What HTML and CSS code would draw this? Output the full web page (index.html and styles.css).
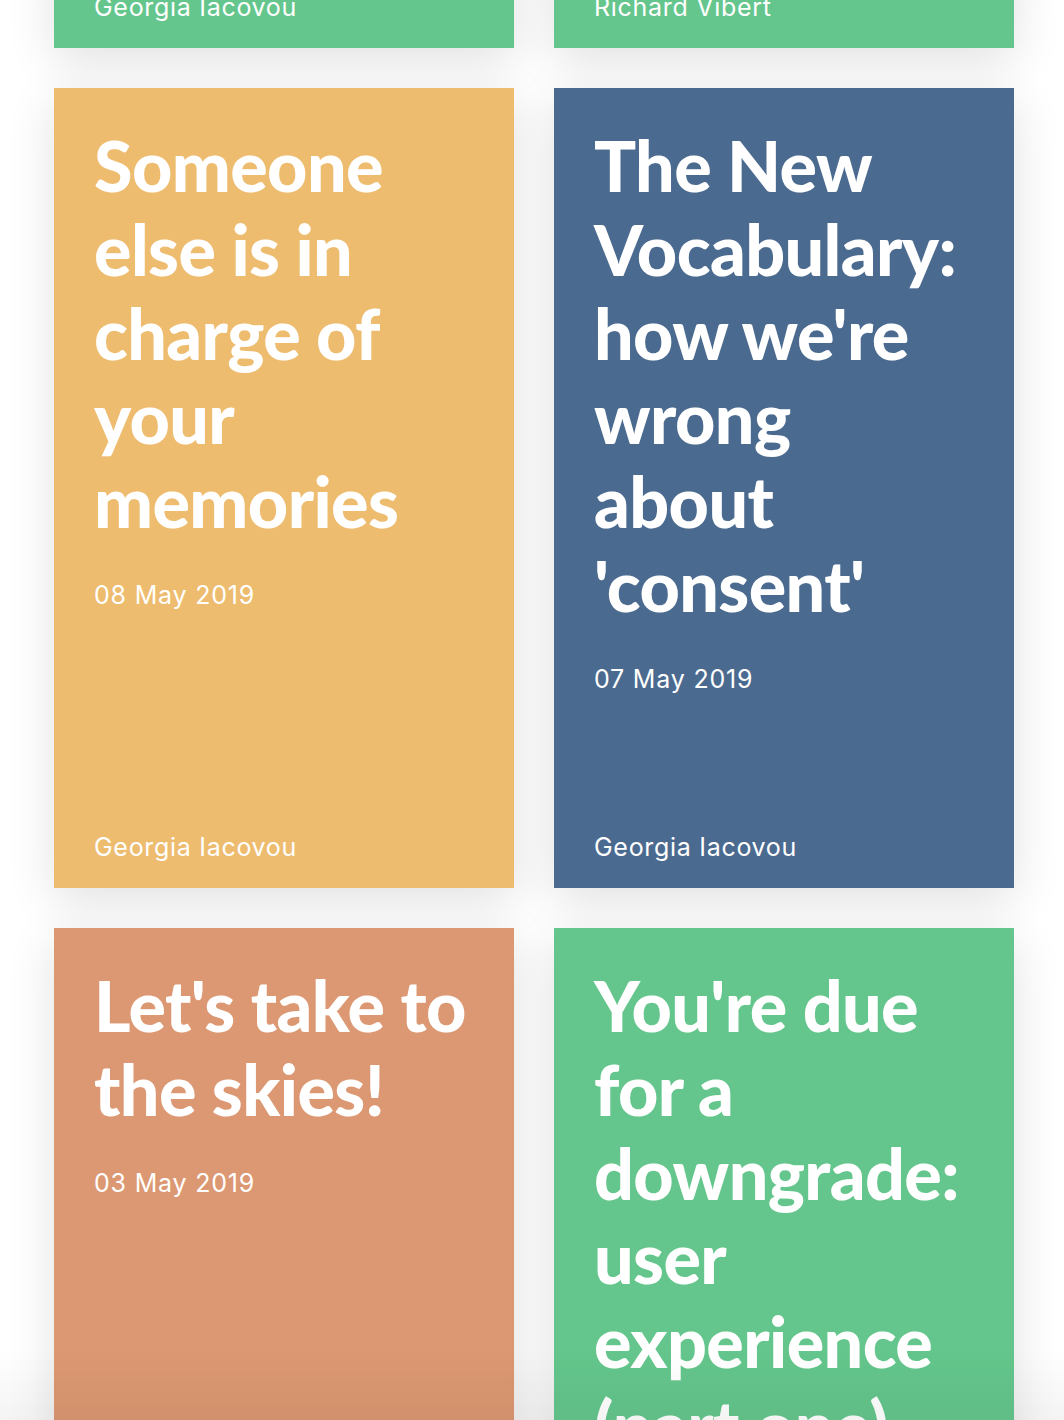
FILE: index.html
```html
<!DOCTYPE html>
<html lang="en">
<head>
<meta charset="utf-8">
<title>Articles</title>
<link rel="stylesheet" href="styles.css">
</head>
<body>
<main class="grid">
  <article class="card green">
    <h2 class="title">Designing for the people who aren't there</h2>
    <p class="date">10 May 2019</p>
    <p class="author">Georgia Iacovou</p>
  </article>
  <article class="card green">
    <h2 class="title">Why your product needs a point of view</h2>
    <p class="date">09 May 2019</p>
    <p class="author">Richard Vibert</p>
  </article>
  <article class="card orange">
    <h2 class="title">Someone else is in charge of your memories</h2>
    <p class="date">08 May 2019</p>
    <p class="author">Georgia Iacovou</p>
  </article>
  <article class="card blue">
    <h2 class="title">The New Vocabulary: how we're wrong about 'consent'</h2>
    <p class="date">07 May 2019</p>
    <p class="author">Georgia Iacovou</p>
  </article>
  <article class="card salmon">
    <h2 class="title">Let's take to the skies!</h2>
    <p class="date">03 May 2019</p>
    <p class="author">Richard Vibert</p>
  </article>
  <article class="card green">
    <h2 class="title">You're due for a downgrade: user experience (part one)</h2>
    <p class="date">01 May 2019</p>
    <p class="author">Georgia Iacovou</p>
  </article>
</main>
<div class="fade"></div>
</body>
</html>
```

FILE: styles.css
```css
html, body {
  margin: 0;
  padding: 0;
  background: #ffffff;
}

body {
  overflow: hidden;
  font-family: Inter, "Noto Sans", sans-serif;
}

.grid {
  display: grid;
  grid-template-columns: 460px 460px;
  column-gap: 40px;
  row-gap: 40px;
  padding-left: 54px;
  margin-top: -752px;
}

.card {
  height: 800px;
  box-sizing: border-box;
  padding: 35px 40px 23px;
  display: flex;
  flex-direction: column;
  color: #ffffff;
  box-shadow: 0 12px 45px rgba(0, 0, 0, 0.12);
}

.green { background: #64c68c; }
.orange { background: #eebc6f; }
.blue { background: #4b6a8f; }
.salmon { background: #dc9872; }

.title {
  margin: 0;
  font-family: Lato, "Liberation Sans", sans-serif;
  font-weight: 900;
  font-size: 70px;
  line-height: 84px;
  letter-spacing: -0.6px;
}

.date {
  margin: 34px 0 0;
  font-size: 25px;
  line-height: 36px;
  letter-spacing: 0.8px;
}

.author {
  margin: auto 0 0;
  font-size: 25px;
  line-height: 36px;
  letter-spacing: 0.7px;
}

.fade {
  position: fixed;
  left: 0;
  right: 0;
  bottom: 0;
  height: 70px;
  background: linear-gradient(to bottom, rgba(0, 0, 0, 0), rgba(0, 0, 0, 0.045));
  pointer-events: none;
}
```
